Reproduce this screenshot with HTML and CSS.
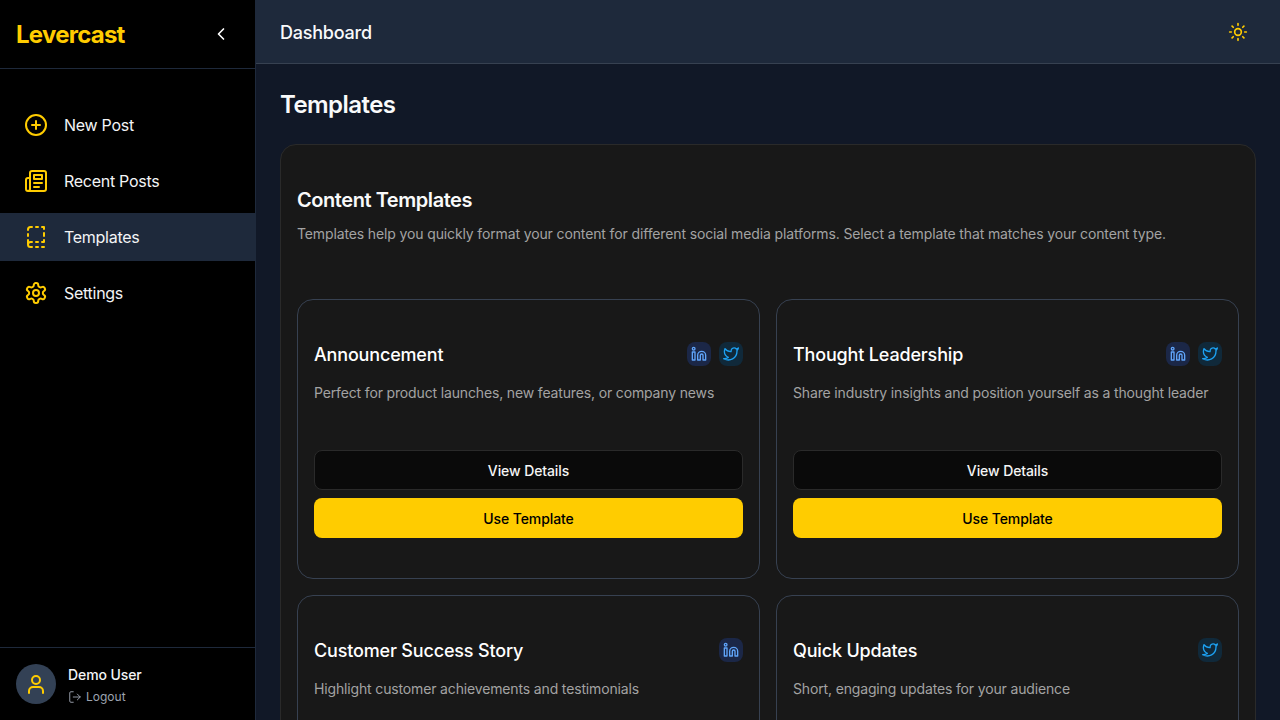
FILE: index.html
```html
<!DOCTYPE html>
<html>
<head>
    <title>Levercast - Templates</title>
    <link rel="stylesheet" href="styles.css">
</head>
<body>
    <aside class="sidebar">
        <div class="brand">
            <span class="brand-name">Levercast</span>
            <svg class="collapse-icon" viewBox="0 0 24 24"><path d="m15 18-6-6 6-6"/></svg>
        </div>
        <nav class="nav">
            <a class="nav-item">
                <svg class="nav-icon" viewBox="0 0 24 24"><circle cx="12" cy="12" r="10"/><path d="M8 12h8M12 8v8"/></svg>
                <span>New Post</span>
            </a>
            <a class="nav-item">
                <svg class="nav-icon" viewBox="0 0 24 24"><path d="M4 22h16a2 2 0 0 0 2-2V4a2 2 0 0 0-2-2H8a2 2 0 0 0-2 2v16a2 2 0 0 1-4 0v-9c0-1.100.900-2 2-2h2"/><path d="M18 14h-8M15 18h-5"/><rect x="10" y="6" width="8" height="4"/></svg>
                <span>Recent Posts</span>
            </a>
            <a class="nav-item active">
                <svg class="nav-icon" viewBox="0 0 24 24"><path d="M20 22h-2M20 15v2h-2M4 19.500V15M20 8v3M18 2h2v2M4 11V9M12 2h2M12 22h2M12 17h2M8 22H6.500a2.500 2.500 0 0 1 0-5H8M4 5v-.5A2.500 2.500 0 0 1 6.500 2H8"/></svg>
                <span>Templates</span>
            </a>
            <a class="nav-item">
                <svg class="nav-icon" viewBox="0 0 24 24"><path d="M12.220 2h-.44a2 2 0 0 0-2 2v.18a2 2 0 0 1-1 1.730l-.43.250a2 2 0 0 1-2 0l-.15-.080a2 2 0 0 0-2.730.730l-.22.380a2 2 0 0 0 .730 2.730l.150.100a2 2 0 0 1 1 1.720v.510a2 2 0 0 1-1 1.740l-.150.090a2 2 0 0 0-.730 2.730l.220.380a2 2 0 0 0 2.730.730l.150-.080a2 2 0 0 1 2 0l.430.250a2 2 0 0 1 1 1.730V20a2 2 0 0 0 2 2h.440a2 2 0 0 0 2-2v-.180a2 2 0 0 1 1-1.730l.430-.250a2 2 0 0 1 2 0l.150.080a2 2 0 0 0 2.730-.730l.220-.390a2 2 0 0 0-.730-2.730l-.150-.080a2 2 0 0 1-1-1.740v-.500a2 2 0 0 1 1-1.740l.150-.090a2 2 0 0 0 .730-2.730l-.220-.380a2 2 0 0 0-2.730-.730l-.150.080a2 2 0 0 1-2 0l-.430-.250a2 2 0 0 1-1-1.730V4a2 2 0 0 0-2-2z"/><circle cx="12" cy="12" r="3"/></svg>
                <span>Settings</span>
            </a>
        </nav>
        <div class="user">
            <div class="avatar">
                <svg viewBox="0 0 24 24"><circle cx="12" cy="8" r="4"/><path d="M5 21v-2a4 4 0 0 1 4-4h6a4 4 0 0 1 4 4v2"/></svg>
            </div>
            <div>
                <div class="user-name">Demo User</div>
                <div class="logout">
                    <svg viewBox="0 0 24 24"><path d="M9 21H5a2 2 0 0 1-2-2V5a2 2 0 0 1 2-2h4M16 17l5-5-5-5M21 12H9"/></svg>
                    <span>Logout</span>
                </div>
            </div>
        </div>
    </aside>

    <div class="content">
        <header class="topbar">
            <span class="topbar-title">Dashboard</span>
            <svg class="theme-icon" viewBox="0 0 24 24"><circle cx="12" cy="12" r="4"/><path d="M12 2v2M12 20v2M4.900 4.900l1.400 1.400M17.700 17.700l1.400 1.400M2 12h2M20 12h2M6.300 17.700l-1.400 1.400M19.100 4.900l-1.400 1.400"/></svg>
        </header>
        <main class="main">
            <h1 class="page-title">Templates</h1>
            <section class="panel">
                <h2 class="panel-title">Content Templates</h2>
                <p class="panel-text">Templates help you quickly format your content for different social media platforms. Select a template that matches your content type.</p>
                <div class="grid">
                    <div class="card">
                        <div class="card-head">
                            <h3>Announcement</h3>
                            <div class="badges">
                                <span class="badge linkedin"><svg viewBox="0 0 24 24"><path d="M16 8a6 6 0 0 1 6 6v7h-4v-7a2 2 0 0 0-4 0v7h-4v-7a6 6 0 0 1 6-6z"/><rect x="2" y="9" width="4" height="12"/><circle cx="4" cy="4" r="2"/></svg></span>
                                <span class="badge twitter"><svg viewBox="0 0 24 24"><path d="M23 3a10.900 10.900 0 0 1-3 1.500 4.500 4.500 0 0 0-7.900 3v1A10.700 10.700 0 0 1 3 4s-4 9 5 13a11.600 11.600 0 0 1-7 2c9 5 20 0 20-11.500a4.500 4.500 0 0 0-.1-.800A7.700 7.700 0 0 0 23 3z"/></svg></span>
                            </div>
                        </div>
                        <p class="card-text">Perfect for product launches, new features, or company news</p>
                        <button class="btn btn-dark">View Details</button>
                        <button class="btn btn-yellow">Use Template</button>
                    </div>
                    <div class="card">
                        <div class="card-head">
                            <h3>Thought Leadership</h3>
                            <div class="badges">
                                <span class="badge linkedin"><svg viewBox="0 0 24 24"><path d="M16 8a6 6 0 0 1 6 6v7h-4v-7a2 2 0 0 0-4 0v7h-4v-7a6 6 0 0 1 6-6z"/><rect x="2" y="9" width="4" height="12"/><circle cx="4" cy="4" r="2"/></svg></span>
                                <span class="badge twitter"><svg viewBox="0 0 24 24"><path d="M23 3a10.900 10.900 0 0 1-3 1.500 4.500 4.500 0 0 0-7.900 3v1A10.700 10.700 0 0 1 3 4s-4 9 5 13a11.600 11.600 0 0 1-7 2c9 5 20 0 20-11.500a4.500 4.500 0 0 0-.1-.800A7.700 7.700 0 0 0 23 3z"/></svg></span>
                            </div>
                        </div>
                        <p class="card-text">Share industry insights and position yourself as a thought leader</p>
                        <button class="btn btn-dark">View Details</button>
                        <button class="btn btn-yellow">Use Template</button>
                    </div>
                    <div class="card">
                        <div class="card-head">
                            <h3>Customer Success Story</h3>
                            <div class="badges">
                                <span class="badge linkedin"><svg viewBox="0 0 24 24"><path d="M16 8a6 6 0 0 1 6 6v7h-4v-7a2 2 0 0 0-4 0v7h-4v-7a6 6 0 0 1 6-6z"/><rect x="2" y="9" width="4" height="12"/><circle cx="4" cy="4" r="2"/></svg></span>
                            </div>
                        </div>
                        <p class="card-text">Highlight customer achievements and testimonials</p>
                        <button class="btn btn-dark">View Details</button>
                        <button class="btn btn-yellow">Use Template</button>
                    </div>
                    <div class="card">
                        <div class="card-head">
                            <h3>Quick Updates</h3>
                            <div class="badges">
                                <span class="badge twitter"><svg viewBox="0 0 24 24"><path d="M23 3a10.900 10.900 0 0 1-3 1.500 4.500 4.500 0 0 0-7.900 3v1A10.700 10.700 0 0 1 3 4s-4 9 5 13a11.600 11.600 0 0 1-7 2c9 5 20 0 20-11.500a4.500 4.500 0 0 0-.1-.800A7.700 7.700 0 0 0 23 3z"/></svg></span>
                            </div>
                        </div>
                        <p class="card-text">Short, engaging updates for your audience</p>
                        <button class="btn btn-dark">View Details</button>
                        <button class="btn btn-yellow">Use Template</button>
                    </div>
                </div>
            </section>
        </main>
    </div>
</body>
</html>
```

FILE: styles.css
```css
* {
    box-sizing: border-box;
}
html, body {
    height: 100%;
}
body {
    margin: 0;
    display: flex;
    overflow: hidden;
    background-color: #111827;
    color: #f9fafb;
    font-family: Inter, "Liberation Sans", sans-serif;
}
svg {
    fill: none;
    stroke: currentColor;
    stroke-linecap: round;
    stroke-linejoin: round;
    stroke-width: 2;
    display: block;
}
h1, h2, h3, p {
    margin: 0;
}

/* sidebar */
.sidebar {
    width: 256px;
    height: 100%;
    flex-shrink: 0;
    display: flex;
    flex-direction: column;
    background-color: #000;
    border-right: 1px solid #1e293b;
}
.brand {
    height: 69px;
    flex-shrink: 0;
    display: flex;
    align-items: center;
    justify-content: space-between;
    padding: 0 24px 0 16px;
    border-bottom: 1px solid #1e293b;
}
.brand-name {
    font-size: 24px;
    font-weight: 700;
    letter-spacing: -0.75px;
    color: #ffcc00;
}
.collapse-icon {
    width: 20px;
    height: 20px;
    color: #fff;
}
.nav {
    flex: 1;
    display: flex;
    flex-direction: column;
    gap: 8px;
    padding-top: 32px;
}
.nav-item {
    height: 48px;
    display: flex;
    align-items: center;
    gap: 16px;
    padding: 0 24px;
    font-size: 16px;
    letter-spacing: -0.28px;
    color: #f3f4f6;
}
.nav-item.active {
    background-color: #1e293b;
}
.nav-icon {
    width: 24px;
    height: 24px;
    color: #ffcc00;
}
.user {
    height: 73px;
    display: flex;
    align-items: center;
    gap: 12px;
    padding: 0 16px;
    border-top: 1px solid #1e293b;
}
.avatar {
    width: 40px;
    height: 40px;
    border-radius: 50%;
    display: flex;
    align-items: center;
    justify-content: center;
    background-color: #334155;
    color: #ffcc00;
}
.avatar svg {
    width: 24px;
    height: 24px;
}
.user-name {
    font-size: 14px;
    font-weight: 500;
    line-height: 20px;
    letter-spacing: -0.1px;
    margin-top: 2px;
    color: #f3f4f6;
}
.logout {
    display: flex;
    align-items: center;
    gap: 4px;
    margin-top: 4px;
    font-size: 12px;
    line-height: 16px;
    color: #9ca3af;
}
.logout svg {
    width: 14px;
    height: 14px;
    stroke-width: 1.6;
}

/* main area */
.content {
    flex: 1;
    min-width: 0;
    display: flex;
    flex-direction: column;
}
.topbar {
    height: 64px;
    flex-shrink: 0;
    display: flex;
    align-items: center;
    justify-content: space-between;
    padding: 0 32px 0 24px;
    background-color: #1e293b;
    border-bottom: 1px solid #374151;
}
.topbar-title {
    font-size: 18px;
    font-weight: 500;
    letter-spacing: -0.22px;
    padding-top: 1px;
}
.theme-icon {
    width: 20px;
    height: 20px;
    color: #ffcc00;
}
.main {
    flex: 1;
    padding: 25px 24px 24px;
}
.page-title {
    font-size: 24px;
    line-height: 32px;
    font-weight: 600;
    letter-spacing: -0.55px;
    margin-bottom: 23px;
}
.panel {
    padding: 40px 16px;
    background-color: #181818;
    border: 1px solid #2a2a2a;
    border-radius: 16px;
}
.panel-title {
    font-size: 20px;
    line-height: 28px;
    font-weight: 600;
    letter-spacing: -0.44px;
    margin-top: 1px;
}
.panel-text {
    font-size: 14px;
    line-height: 20px;
    letter-spacing: -0.13px;
    margin-top: 10px;
    color: #a3a3a3;
}
.grid {
    display: grid;
    grid-template-columns: 1fr 1fr;
    gap: 16px;
    margin-top: 55px;
}
.card {
    height: 280px;
    padding: 42px 16px 40px;
    background-color: #181818;
    border: 1px solid #374151;
    border-radius: 16px;
}
.card-head {
    display: flex;
    align-items: center;
    justify-content: space-between;
    height: 24px;
}
.card-head h3 {
    font-size: 18px;
    font-weight: 500;
    letter-spacing: -0.17px;
    color: #fff;
}
.badges {
    display: flex;
    gap: 8px;
}
.badge {
    width: 24px;
    height: 24px;
    display: flex;
    align-items: center;
    justify-content: center;
    border-radius: 8px;
}
.badge svg {
    width: 16px;
    height: 16px;
}
.linkedin {
    background-color: #1b2747;
    color: #60a5fa;
}
.twitter {
    background-color: #10293a;
    color: #1da1f2;
}
.card-text {
    height: 67px;
    margin-top: 17px;
    font-size: 14px;
    line-height: 20px;
    letter-spacing: -0.15px;
    color: #a3a3a3;
}
.btn {
    display: block;
    width: 100%;
    height: 40px;
    border-radius: 8px;
    font-family: inherit;
    font-size: 14px;
    font-weight: 500;
    letter-spacing: -0.1px;
}
.btn-dark {
    background-color: #0a0a0a;
    color: #f5f5f5;
    border: 1px solid #2a2a2a;
    margin-bottom: 8px;
}
.btn-yellow {
    background-color: #ffcc00;
    color: #000;
    border: none;
}
```
